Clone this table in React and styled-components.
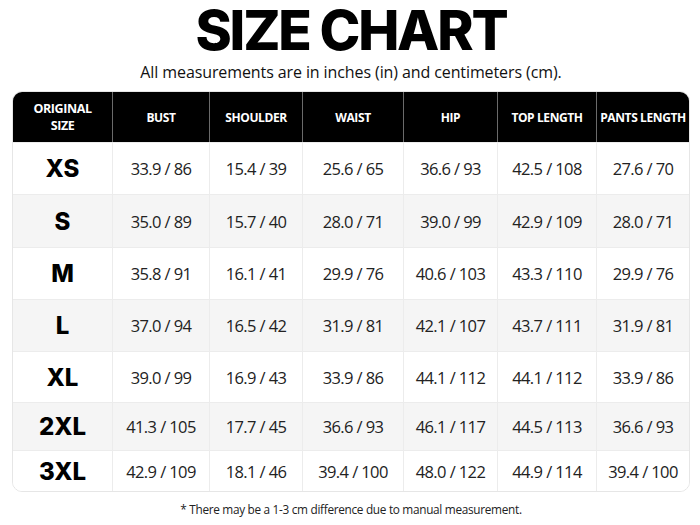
import React from 'react';
import styled, { createGlobalStyle } from 'styled-components';

const GlobalStyle = createGlobalStyle`
  html, body {
    margin: 0;
    padding: 0;
    background: #ffffff;
  }
  body {
    font-family: "Open Sans", "Liberation Sans", sans-serif;
    color: #111111;
  }
`

const columns = ['BUST', 'SHOULDER', 'WAIST', 'HIP', 'TOP LENGTH', 'PANTS LENGTH'];

const rows = [
  { size: 'XS', h: 52, values: ['33.9 / 86', '15.4 / 39', '25.6 / 65', '36.6 / 93', '42.5 / 108', '27.6 / 70'] },
  { size: 'S', h: 53, values: ['35.0 / 89', '15.7 / 40', '28.0 / 71', '39.0 / 99', '42.9 / 109', '28.0 / 71'] },
  { size: 'M', h: 52, values: ['35.8 / 91', '16.1 / 41', '29.9 / 76', '40.6 / 103', '43.3 / 110', '29.9 / 76'] },
  { size: 'L', h: 52, values: ['37.0 / 94', '16.5 / 42', '31.9 / 81', '42.1 / 107', '43.7 / 111', '31.9 / 81'] },
  { size: 'XL', h: 51, values: ['39.0 / 99', '16.9 / 43', '33.9 / 86', '44.1 / 112', '44.1 / 112', '33.9 / 86'] },
  { size: '2XL', h: 48, values: ['41.3 / 105', '17.7 / 45', '36.6 / 93', '46.1 / 117', '44.5 / 113', '36.6 / 93'] },
  { size: '3XL', h: 41, values: ['42.9 / 109', '18.1 / 46', '39.4 / 100', '48.0 / 122', '44.9 / 114', '39.4 / 100'] },
];

const App = () => {
  return (
    <>
      <GlobalStyle />
      <Page>
        <Title>SIZE CHART</Title>
        <Subtitle>All measurements are in inches (in) and centimeters (cm).</Subtitle>
        <Table>
          <HeadRow>
            <HeadCell>ORIGINAL<br />SIZE</HeadCell>
            {columns.map((c) => <HeadCell key={c}>{c}</HeadCell>)}
          </HeadRow>
          {rows.map((r, i) => (
            <BodyRow key={r.size} $shaded={i % 2 === 1} $height={r.h}>
              <SizeCell>{r.size}</SizeCell>
              {r.values.map((v, j) => <ValueCell key={j}>{v}</ValueCell>)}
            </BodyRow>
          ))}
        </Table>
        <Note>* There may be a 1-3 cm difference due to manual measurement.</Note>
      </Page>
    </>
  )
}

export default App;

const Page = styled.div`
  width: 700px;
  height: 525px;
  box-sizing: border-box;
  padding: 0 10px 0 12px;
  display: flex;
  flex-direction: column;
  align-items: center;
  overflow: hidden;
`
const Title = styled.h1`
  margin: 0;
  padding: 0 6px;
  height: 60px;
  font-family: "Inter", "Liberation Sans", sans-serif;
  font-weight: 800;
  font-size: 55px;
  line-height: 60px;
  letter-spacing: -2.2px;
  white-space: nowrap;
  color: #000000;
`
const Subtitle = styled.div`
  height: 31px;
  font-size: 16px;
  line-height: 24px;
  color: #111111;
  letter-spacing: -0.1px;
`
const Table = styled.div`
  width: 100%;
  border: 1px solid #e6e6e6;
  border-radius: 10px;
  overflow: hidden;
  box-sizing: border-box;
`
const HeadRow = styled.div`
  display: grid;
  grid-template-columns: 99px 97px 93px 101px 94px 99px 1fr;
  height: 50px;
  background: #000000;
`
const HeadCell = styled.div`
  display: flex;
  align-items: center;
  justify-content: center;
  text-align: center;
  color: #ffffff;
  font-family: "Open Sans", "Liberation Sans", sans-serif;
  font-weight: 700;
  font-size: 12px;
  line-height: 17px;
  letter-spacing: -0.4px;
  white-space: nowrap;
  border-left: 1px solid #6a6a6a;
  &:first-child {
    border-left: none;
    font-size: 12.5px;
  }
`
const BodyRow = styled.div`
  display: grid;
  grid-template-columns: 99px 97px 93px 101px 94px 99px 1fr;
  height: ${({ $height }) => $height}px;
  background: ${({ $shaded }) => ($shaded ? '#f5f5f5' : '#ffffff')};
  border-top: 1px solid #ececec;
  box-sizing: border-box;
`
const SizeCell = styled.div`
  display: flex;
  align-items: center;
  justify-content: center;
  font-family: "Inter", "Liberation Sans", sans-serif;
  font-weight: 800;
  font-size: 24px;
  color: #000000;
`
const ValueCell = styled.div`
  display: flex;
  align-items: center;
  justify-content: center;
  font-family: "Open Sans", "Liberation Sans", sans-serif;
  font-size: 16.5px;
  letter-spacing: -0.6px;
  color: #222222;
  border-left: 1px solid #ececec;
`
const Note = styled.div`
  margin-top: 9px;
  font-size: 11.8px;
  color: #222222;
  letter-spacing: -0.3px;
`
